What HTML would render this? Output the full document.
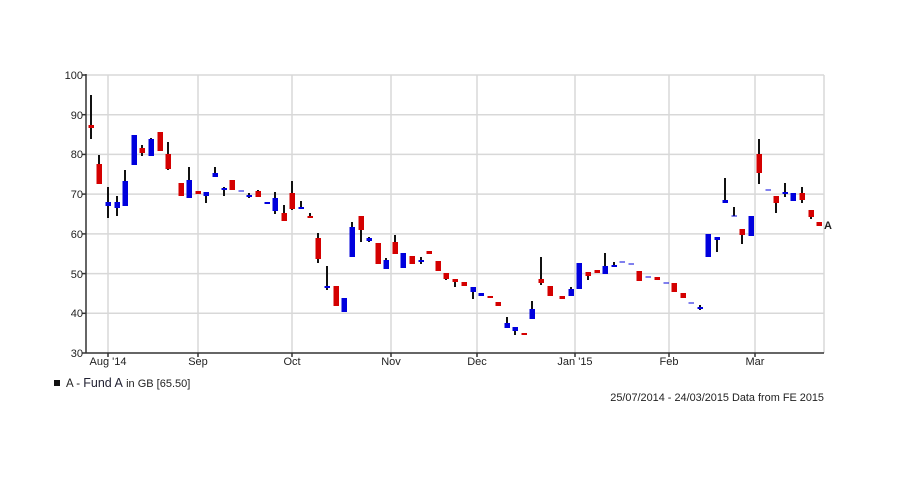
<!DOCTYPE html>
<html><head><meta charset="utf-8"><style>
html,body{margin:0;padding:0;background:#fff;width:900px;height:500px;overflow:hidden}
svg{display:block}
text{font-family:"Liberation Sans",Arial,sans-serif;fill:#222}
</style></head><body>
<svg id="c" width="900" height="500" xmlns="http://www.w3.org/2000/svg">
<g stroke="#d8d8d8" stroke-width="1.5">
<line x1="86" x2="824" y1="114.7" y2="114.7"/><line x1="86" x2="824" y1="154.4" y2="154.4"/>
<line x1="86" x2="824" y1="194.1" y2="194.1"/><line x1="86" x2="824" y1="233.9" y2="233.9"/>
<line x1="86" x2="824" y1="273.6" y2="273.6"/><line x1="86" x2="824" y1="313.3" y2="313.3"/>
<line x1="86" x2="824" y1="75" y2="75"/>
<line x1="108" x2="108" y1="75" y2="353"/><line x1="198" x2="198" y1="75" y2="353"/>
<line x1="292" x2="292" y1="75" y2="353"/><line x1="391" x2="391" y1="75" y2="353"/>
<line x1="477" x2="477" y1="75" y2="353"/><line x1="575" x2="575" y1="75" y2="353"/>
<line x1="669" x2="669" y1="75" y2="353"/><line x1="755" x2="755" y1="75" y2="353"/>
<line x1="824" x2="824" y1="75" y2="353"/>
</g>
<g stroke="#333" stroke-width="1.5">
<line x1="86" x2="86" y1="74" y2="353"/><line x1="86" x2="824" y1="353" y2="353"/>
<line x1="82" x2="86" y1="75" y2="75"/><line x1="82" x2="86" y1="114.7" y2="114.7"/><line x1="82" x2="86" y1="154.4" y2="154.4"/><line x1="82" x2="86" y1="194.1" y2="194.1"/><line x1="82" x2="86" y1="233.9" y2="233.9"/><line x1="82" x2="86" y1="273.6" y2="273.6"/><line x1="82" x2="86" y1="313.3" y2="313.3"/><line x1="82" x2="86" y1="353" y2="353"/>
<line x1="108" x2="108" y1="353" y2="357"/><line x1="198" x2="198" y1="353" y2="357"/><line x1="292" x2="292" y1="353" y2="357"/><line x1="391" x2="391" y1="353" y2="357"/><line x1="477" x2="477" y1="353" y2="357"/><line x1="575" x2="575" y1="353" y2="357"/><line x1="669" x2="669" y1="353" y2="357"/><line x1="755" x2="755" y1="353" y2="357"/>
</g>
<g font-size="11" text-anchor="end">
<text x="83" y="79">100</text><text x="83" y="119">90</text><text x="83" y="158">80</text><text x="83" y="198">70</text><text x="83" y="238">60</text><text x="83" y="278">50</text><text x="83" y="317">40</text><text x="83" y="357">30</text>
</g>
<g font-size="11" text-anchor="middle">
<text x="108" y="365">Aug '14</text><text x="198" y="365">Sep</text><text x="292" y="365">Oct</text><text x="391" y="365">Nov</text><text x="477" y="365">Dec</text><text x="575" y="365">Jan '15</text><text x="669" y="365">Feb</text><text x="755" y="365">Mar</text>
</g>
<g id="k"></g>
<text x="824" y="229" font-size="11" font-weight="bold">A</text>
<rect x="54" y="380" width="6" height="6" fill="#111"/>
<text x="66" y="387" font-size="11.5">A - <tspan fill="#223" font-size="12.5">Fund A</tspan> <tspan font-size="11">in GB [65.50]</tspan></text>
<text x="824" y="401" font-size="10.9" text-anchor="end">25/07/2014 - 24/03/2015 Data from FE 2015</text>
</svg>
<script>
var R="#d40000",B="#0000dd";
var d=[
[91,125,128,95,139,R],[99,164,184,155,184,R],[108,202,206,187,218,B],[117,202,208,196,216,B],[125,181,206,170,206,B],
[134,135,165,135,165,B],[142,148,153,145,156,R],[151,139,156,138,156,B],[160,132,151,132,151,R],[168,154,169,142,170,R],
[181,183,196,183,196,R],[189,180,198,167,198,B],[198,191,194,191,194,R],[206,192,196,192,203,B],[215,173,177,167,177,B],
[224,188,190,187,196,B],[232,180,190,180,190,R],[241,190.5,191.5,191,191,B],[249,195,197,193,198,B],[258,191,197,190,197,R],
[267,202,204,202,204,B],[275,198,211,192,214,B],[284,213,221,205,221,R],[292,193,209,181,210,R],[301,207,209,201,209,B],
[310,216,218,213,218,R],[318,238,259,233,263,R],[327,286,288,266,290,B],[336,286,306,286,306,R],[344,298,312,298,312,B],
[352,227,257,222,257,B],[361,216,230,216,242,R],[369,238,241,237,242,B],[378,243,264,243,264,R],[386,260,269,258,269,B],
[395,242,254,235,254,R],[403,253,268,253,268,B],[412,256,264,256,264,R],[421,260,262,257,264,B],[429,251,254,251,254,R],
[438,261,271,261,271,R],[446,273,279,273,280,R],[455,279,282,279,287,R],[464,282,286,282,286,R],[473,287,292,287,299,B],
[481,293,296,293,296,B],[490,296,298,296,298,R],[498,302,306,302,306,R],[507,323,328,317,328,B],[515,327,331,327,335,B],
[524,333,335,333,335,R],[532,309,319,301,319,B],[541,279,283,257,285,R],[550,286,296,286,296,R],[562,296,299,296,299,R],
[571,289,296,287,296,B],[579,263,289,263,289,B],[588,272,276,272,280,R],[597,270,273,270,273,R],[605,266,274,253,274,B],
[614,265,267,262,267,B],[622,261.5,262.5,262,262,B],[631,263.5,264.5,264,264,B],[639,271,281,271,281,R],[648,276.5,277.5,277,277,B],
[657,277,280,277,280,R],[666,282.5,283.5,283,283,B],[674,283,292,283,292,R],[683,293,298,293,298,R],[691,302.5,303.5,303,303,B],
[700,307,309,305,310,B],[708,234,257,234,257,B],[717,237,240,237,252,B],[725,200,203,178,203,B],[734,215.5,216.5,207,216,B],
[742,229,235,229,244,R],[751,216,236,216,236,B],[759,154,173,139,184,R],[768,189.5,190.5,190,190,B],[776,196,203,196,213,R],
[785,192,194,183,197,B],[793,193,201,193,201,B],[802,193,200,187,203,R],[811,210,217,210,219,R],[819,222,226,222,226,R]];
var s="";
d.forEach(function(c){
s+='<line x1="'+c[0]+'" x2="'+c[0]+'" y1="'+c[3]+'" y2="'+c[4]+'" stroke="#111" stroke-width="2"/>';
s+='<rect x="'+(c[0]-2.5)+'" y="'+c[1]+'" width="5.5" height="'+Math.max(1,c[2]-c[1])+'" fill="'+c[5]+'"/>';
});
document.getElementById("k").innerHTML=s;
</script>
</body></html>
